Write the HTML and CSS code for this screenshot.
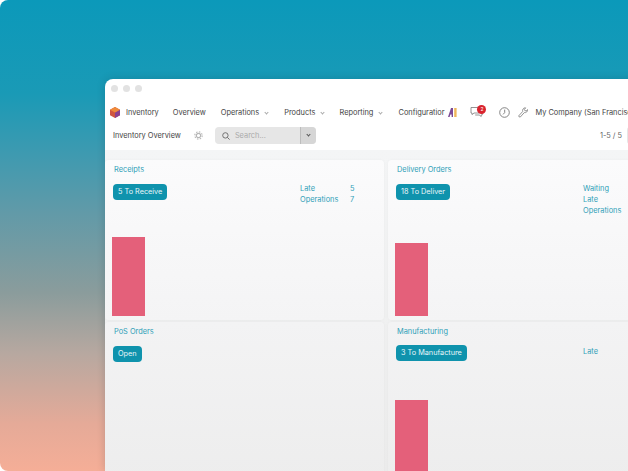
FILE: index.html
```html
<!DOCTYPE html>
<html lang="en">
<head>
    <meta charset="UTF-8">
    <title>Inventory Overview</title>
    <link rel="stylesheet" href="styles.css">
</head>
<body>

    <div class="stage">
        <div class="window">
            <div class="titlebar">
                <span class="dot"></span>
                <span class="dot"></span>
                <span class="dot"></span>
            </div>

            <!-- main menu -->
            <div class="navbar">
                <svg class="logo" width="10" height="11" viewBox="0 0 10 11">
                    <polygon points="5,0 10,2.75 10,8.25 5,11 0,8.25 0,2.75" fill="#d0563f"/>
                    <polygon points="5,5.5 10,2.75 10,8.25 5,11" fill="#8a4190"/>
                    <polygon points="5,0 10,2.75 5,5.5 0,2.75" fill="#ef8a3a"/>
                </svg>
                <span class="nav-item nav-app">Inventory</span>
                <span class="nav-item nav-overview">Overview</span>
                <span class="nav-item nav-ops">Operations <i class="caret"></i></span>
                <span class="nav-item nav-products">Products <i class="caret"></i></span>
                <span class="nav-item nav-reporting">Reporting <i class="caret"></i></span>
                <span class="nav-item nav-config">Configuratior</span>
                <svg class="ai-icon" width="9" height="9" viewBox="0 0 9 9">
                    <polygon points="0,9 3,0 5,0 5,9 3.6,9 3.6,6.5 2.4,6.5 1.6,9" fill="#7a4a96"/>
                    <rect x="6.2" y="0" width="2.4" height="9" fill="#efb65a"/>
                </svg>
                <span class="chat">
                    <svg width="13" height="12" viewBox="0 0 13 12" fill="none" stroke="#888" stroke-width="0.9">
                        <path d="M1 1.5h8v5.5h-5l-2 1.6v-1.6h-1z"/>
                        <path d="M10.5 4h1.7v5h-1v1.5l-2-1.5h-4"/>
                    </svg>
                    <span class="badge">2</span>
                </span>
                <svg class="clock" width="11" height="11" viewBox="0 0 11 11" fill="none" stroke="#777" stroke-width="0.9">
                    <circle cx="5.5" cy="5.5" r="4.8"/>
                    <path d="M5.7 2.6v3l-1.6 1.8"/>
                </svg>
                <svg class="wrench" width="10" height="11" viewBox="0 0 10 11" fill="none" stroke="#888" stroke-width="0.9">
                    <path d="M1 9.800l-.3-.9 4-4.400c-.5-1.500.3-3.500 2.300-3.700l.7.1-1.400 1.500.6 1.300 1.300.2 1.300-1.300c.3 1.900-1.300 3.400-3.200 3l-4 4.400z"/>
                </svg>
                <span class="company">My Company (San Francisco)</span>
            </div>

            <!-- search and pager -->
            <div class="controls">
                <span class="crumb">Inventory Overview</span>
                <svg class="gear" width="9" height="9" viewBox="0 0 9 9" fill="none" stroke="#b5b5b5">
                    <circle cx="4.500" cy="4.500" r="2.200" stroke-width="1.200"/>
                    <circle cx="4.500" cy="4.500" r="3.700" stroke-width="1.100" stroke-dasharray="1.500 1.400"/>
                </svg>
                <div class="search">
                    <svg width="8" height="8" viewBox="0 0 8 8" fill="none" stroke="#666" stroke-width="0.9">
                        <circle cx="3.400" cy="3.400" r="2.700"/>
                        <path d="M5.400 5.400l2.200 2.200"/>
                    </svg>
                    <span class="search-text">Search...</span>
                    <span class="search-toggle"><i class="caret caret-dark"></i></span>
                </div>
                <span class="pager">1-5 / 5</span>
                <span class="pager-btn"></span>
            </div>

            <!-- dashboard cards -->
            <div class="board">
                <div class="card">
                    <div class="card-title">Receipts</div>
                    <div class="card-head">
                        <span class="action">5 To Receive</span>
                        <div class="stats">
                            <div class="stat"><span class="stat-label">Late</span><span>5</span></div>
                            <div class="stat"><span class="stat-label">Operations</span><span>7</span></div>
                        </div>
                    </div>
                    <div class="bar bar-receipts"></div>
                </div>
                <div class="card">
                    <div class="card-title">Delivery Orders</div>
                    <div class="card-head">
                        <span class="action">18 To Deliver</span>
                        <div class="stats">
                            <div class="stat"><span class="stat-label">Waiting</span></div>
                            <div class="stat"><span class="stat-label">Late</span></div>
                            <div class="stat"><span class="stat-label">Operations</span></div>
                        </div>
                    </div>
                    <div class="bar bar-delivery"></div>
                </div>
                <div class="card">
                    <div class="card-title">PoS Orders</div>
                    <div class="card-head">
                        <span class="action">Open</span>
                    </div>
                </div>
                <div class="card">
                    <div class="card-title">Manufacturing</div>
                    <div class="card-head">
                        <span class="action">3 To Manufacture</span>
                        <div class="stats stats-up">
                            <div class="stat"><span class="stat-label">Late</span></div>
                        </div>
                    </div>
                    <div class="bar bar-manufacturing"></div>
                </div>
            </div>
        </div>
    </div>

</body>
</html>
```

FILE: styles.css
```css
html, body {
    margin: 0;
    height: 100%;
    overflow: hidden;
}
body {
    font-family: Inter, "Liberation Sans", sans-serif;
    background-color: #fff;
}
.stage {
    width: 628px;
    height: 471px;
    box-sizing: border-box;
    padding: 79px 0 0 105px;
    overflow: hidden;
    border-radius: 8px 0 0 8px;
    background: linear-gradient(180deg, #0b99ba 0%, #1a9ab6 20%, #3f9ab0 33%, #619aa8 45%, #8a9c9c 62%, #b7a8a0 75%, #e5aa98 90%, #f5ae97 100%);
}
.window {
    width: 640px;
    height: 392px;
    overflow: hidden;
    border-radius: 8px 0 0 0;
    background-color: #fff;
    box-shadow: 0 0 8px rgba(0, 40, 50, 0.18);
}
.titlebar {
    display: flex;
    gap: 5px;
    align-items: center;
    height: 21px;
    padding: 0 0 3px 6px;
    box-sizing: border-box;
}
.dot {
    width: 7px;
    height: 7px;
    border-radius: 50%;
    background-color: #e2e2e2;
}
.navbar {
    display: flex;
    align-items: center;
    height: 24px;
    padding-left: 5px;
    font-size: 7.4px;
    color: #444;
    white-space: nowrap;
}
.logo { margin-right: 6px; }
.nav-app { margin-right: 14px; }
.nav-overview { margin-right: 15px; }
.nav-ops { margin-right: 16px; }
.nav-products { margin-right: 15px; }
.nav-reporting { margin-right: 16px; }
.caret {
    display: inline-block;
    width: 2px;
    height: 2px;
    margin: 0 0 1px 4px;
    border-right: 1px solid #aaa;
    border-bottom: 1px solid #aaa;
    transform: rotate(45deg);
}
.caret-dark {
    margin: 0 0 2px;
    border-color: #555;
}
.ai-icon { margin-left: 4px; }
.chat {
    position: relative;
    display: flex;
    margin-left: 13px;
}
.badge {
    position: absolute;
    top: -1px;
    left: 7px;
    width: 9px;
    height: 9px;
    border-radius: 50%;
    background-color: #d9232e;
    color: #fff;
    font-size: 5px;
    line-height: 9px;
    text-align: center;
}
.clock { margin-left: 16px; }
.wrench { margin-left: 8px; }
.company { margin-left: 7px; }
.controls {
    display: flex;
    align-items: center;
    height: 26px;
    padding: 0 0 3px 8px;
    box-sizing: border-box;
    font-size: 7.4px;
    color: #444;
    white-space: nowrap;
}
.gear { margin-left: 13px; }
.search {
    display: flex;
    align-items: center;
    width: 101px;
    height: 17px;
    margin-left: 12px;
    padding-left: 7px;
    box-sizing: border-box;
    border-radius: 4px;
    background-color: #e6e6e6;
}
.search-text {
    flex: 1;
    margin-left: 5px;
    color: #aaa;
}
.search-toggle {
    display: flex;
    align-items: center;
    justify-content: center;
    width: 16px;
    height: 17px;
    border-radius: 0 4px 4px 0;
    border-left: 1px solid #bdbdbd;
    box-sizing: border-box;
    background-color: #d6d6d6;
}
.pager {
    margin-left: 284px;
    color: #666;
}
.pager-btn {
    width: 12px;
    height: 17px;
    margin-left: 5px;
    border-radius: 3px 0 0 3px;
    background-color: #e6e6e6;
}
.board {
    display: grid;
    grid-template-columns: 279px 279px;
    grid-auto-rows: 160px;
    gap: 2px 4px;
    height: 321px;
    padding-top: 10px;
    box-sizing: border-box;
    background: linear-gradient(180deg, #f4f5f6 0%, #ececec 100%);
}
.card {
    position: relative;
    display: flex;
    flex-direction: column;
    padding: 5px 7px 0 9px;
    box-sizing: border-box;
    border-radius: 4px;
    background: linear-gradient(180deg, #fbfbfc 0%, #f4f4f5 100%);
    box-shadow: 0 0 3px rgba(0, 0, 0, 0.04);
}
.card:nth-child(n+3) {
    background: linear-gradient(180deg, #f3f3f4 0%, #ededed 100%);
}
.card-title {
    height: 10px;
    font-size: 7.4px;
    line-height: 9px;
    color: #2f9fb8;
}
.card-head {
    display: flex;
    align-items: flex-start;
    margin-top: 9px;
}
.action {
    height: 16px;
    margin-left: -1px;
    padding: 0 5px;
    border-radius: 4px;
    background-color: #0f93ad;
    color: #e8f6f9;
    font-size: 7.3px;
    line-height: 16px;
    white-space: nowrap;
}
.stats {
    position: absolute;
    margin: -1px 0 0 186px;
    font-size: 7.4px;
    line-height: 11px;
    color: #2f9fb8;
}
.stats-up { margin-top: 1px; }
.stat {
    display: flex;
}
.stat-label { width: 50px; }
.bar {
    width: 33px;
    margin: auto 0 0 -2px;
    background-color: #e4607a;
}
.bar-receipts { height: 79px; margin-bottom: 4px; }
.bar-delivery { height: 73px; margin-bottom: 4px; }
.bar-manufacturing { height: 120px; margin-top: 39px; flex: none; }
```
